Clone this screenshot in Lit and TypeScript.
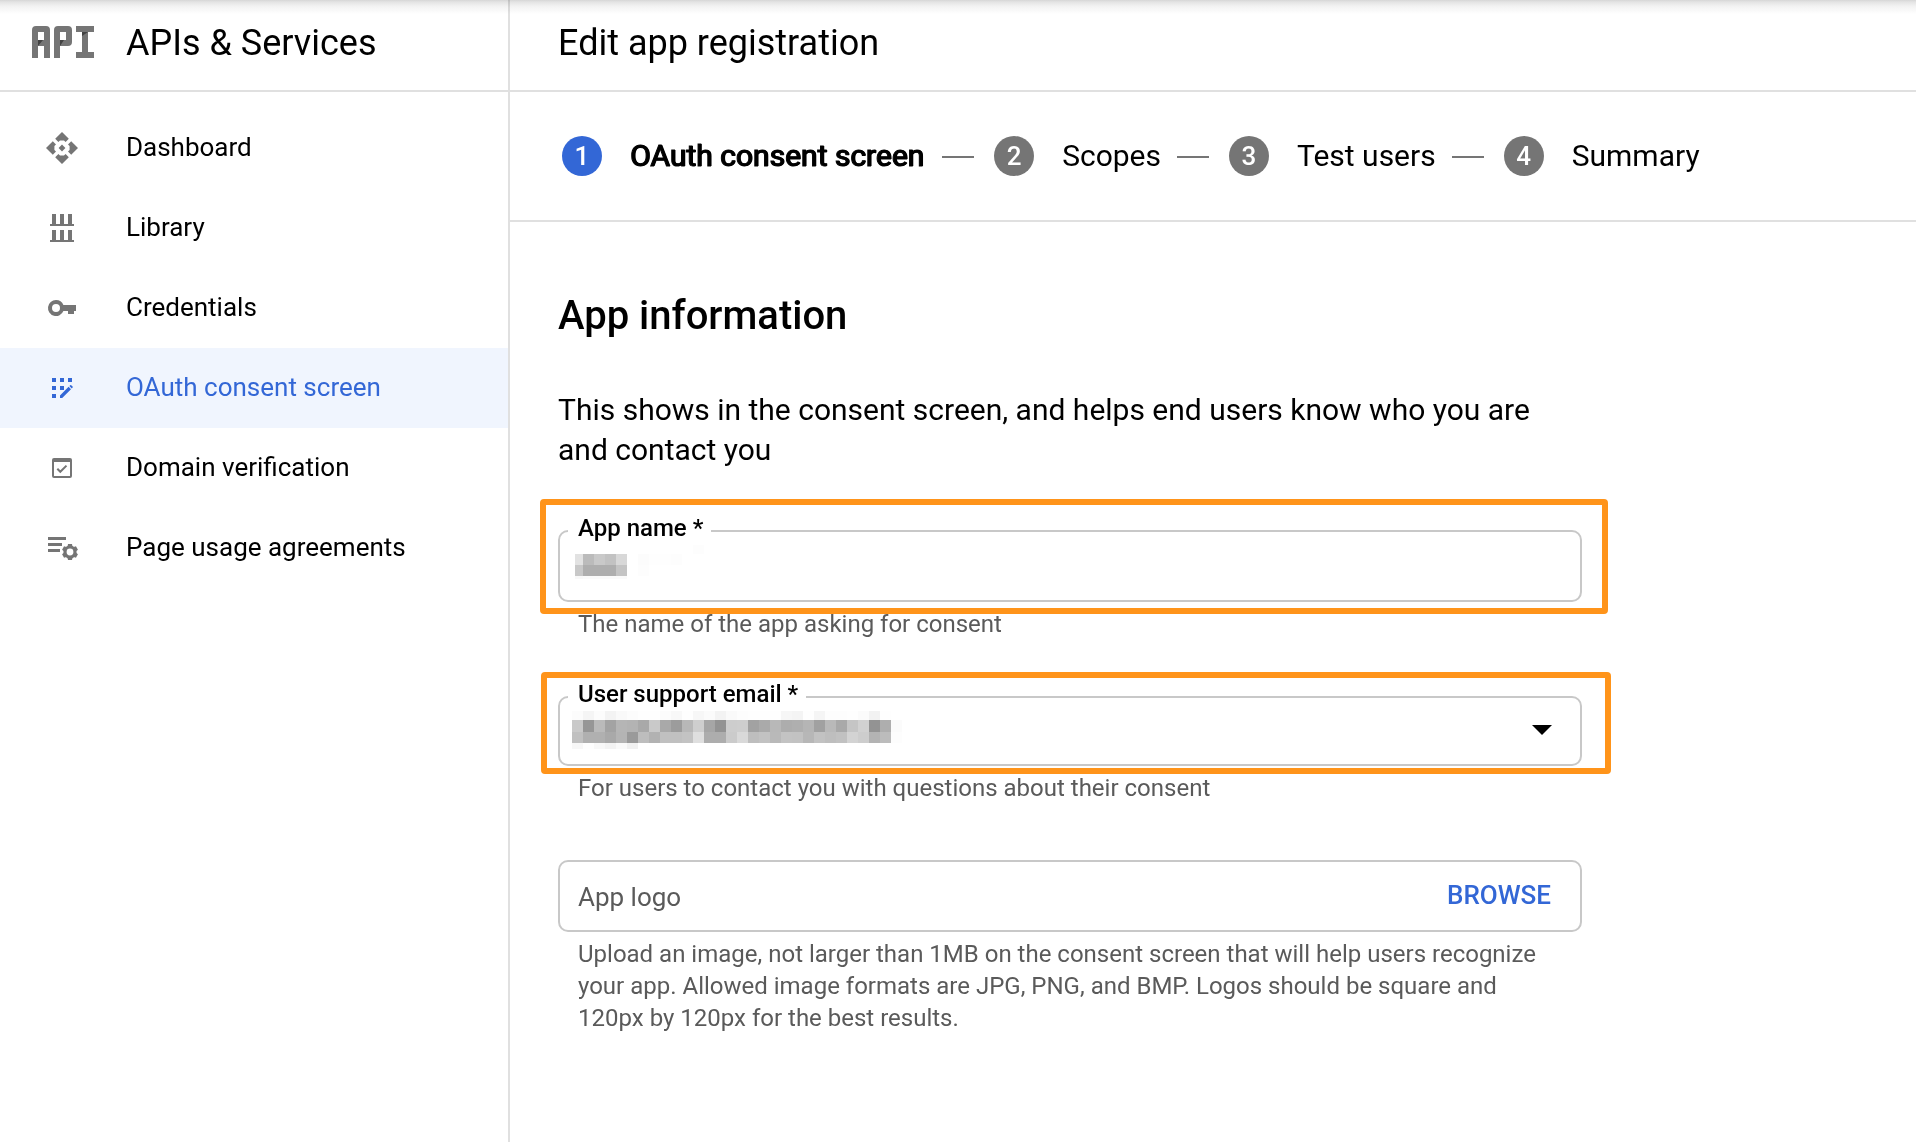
import { LitElement, html, svg, css, nothing } from "lit";
import type { SVGTemplateResult } from "lit";
import { customElement, property } from "lit/decorators.js";
import { classMap } from "lit/directives/class-map.js";

const diamondArm = "M18 2l6.8 6.8-3.2 3.2-1.6-1.6h-4L14.4 12l-3.2-3.2z";

const icons: Record<string, SVGTemplateResult> = {
  dashboard: svg`
    ${[0, 90, 180, 270].map((a) => svg`<path d=${diamondArm} transform="rotate(${a} 18 18)" />`)}
    <path d="M18 14.6l3.4 3.4-3.4 3.4-3.4-3.4z" />`,
  library: svg`
    <path d="M6 14h24v2H6zM8 4h4v10H8zM16 4h4v10h-4zM24 4h4v10h-4z" />
    <path d="M6 30h24v2H6zM8 20h4v10H8zM16 20h4v10h-4zM24 20h4v10h-4z" />`,
  key: svg`
    <path fill-rule="evenodd" d="M12 10a8 8 0 0 1 7.4 5H32v6h-2v3h-6v-3h-4.6A8 8 0 1 1 12 10zm0 4a4 4 0 1 0 0 8 4 4 0 0 0 0-8z" />`,
  consent: svg`
    <path d="M8 8h4v4H8zM16 8h4v4h-4zM24 8h4v4h-4zM8 16h4v4H8zM16 16h4v4h-4zM8 24h4v4H8z" />
    <path d="M16 28v-2.6l8.6-8.6 2.4 2.4-8.8 8.8zM25.4 16l.8-.8a.7.7 0 0 1 1 0l1.4 1.4a.7.7 0 0 1 0 1l-.8.8z" />`,
  domain: svg`
    <path fill-rule="evenodd" d="M10 8h16a2 2 0 0 1 2 2v16a2 2 0 0 1-2 2H10a2 2 0 0 1-2-2V10a2 2 0 0 1 2-2zm0 4v14h16V12z" />
    <path d="M13.3 18.8l3 3 6.2-6.2" fill="none" stroke="currentColor" stroke-width="2" />`,
  agreements: svg`
    <path d="M4 7h18v3H4zM4 13h14v3H4zM4 19h12v3H4z" />
    <circle cx="26" cy="22" r="5" fill="none" stroke="currentColor" stroke-width="3.2" />
    ${[0, 60, 120, 180, 240, 300].map(
      (a) => svg`<path d="M24 14h4l.6 3h-5.2z" transform="rotate(${a} 26 22)" />`
    )}`,
};

@customElement("nav-item")
class NavItem extends LitElement {
  @property() icon = "";
  @property() label = "";
  @property({ type: Boolean }) active = false;

  static styles = css`
    :host {
      display: block;
    }
    .item {
      display: flex;
      align-items: center;
      gap: 46px;
      height: 80px;
      padding-left: 44px;
      color: #000;
      font-size: 26px;
      text-decoration: none;
      white-space: nowrap;
    }
    .icon {
      flex: none;
      width: 36px;
      height: 36px;
      color: #757575;
      fill: currentColor;
    }
    .text {
      padding-bottom: 2px;
    }
    .active {
      background: #f0f5fe;
      color: #3367d6;
    }
    .active .icon {
      color: #3367d6;
    }
  `;

  render() {
    return html`<a
      href="#"
      class=${classMap({ item: true, active: this.active })}
      aria-current=${this.active ? "page" : nothing}
    >
      <svg class="icon" viewBox="0 0 36 36" aria-hidden="true">${icons[this.icon]}</svg>
      <span class="text">${this.label}</span>
    </a>`;
  }
}

interface Cell {
  x: number;
  y: number;
  w: number;
  h: number;
  shade: string;
}

/* Lays a run of two-digit grey shades out as one row of blocks. */
const row = (y: number, h: number, first: number, shades: string, start = 0): Cell[] =>
  shades.split(" ").map((shade, i) => ({
    x: start + (i === 0 ? 0 : first + (i - 1) * 11),
    y,
    w: i === 0 ? first : 11,
    h,
    shade,
  }));

const nameCells: Cell[] = [
  ...row(11, 11, 8, "e2 bb c9 c2 d8", 3),
  ...row(22, 11, 8, "c8 ae ae ae c4", 3),
  ...row(33, 3, 8, "f8 fa fa fa fa", 3),
  ...row(11, 11, 11, "fc fe fe fd", 66),
  ...row(22, 11, 11, "fd", 66),
  ...row(2, 9, 11, "fd", 121),
];

const emailCells: Cell[] = [
  ...row(2, 9, 11, "fc f5 fc f3 f9 fc fe fe fc f8 fe f7 fb f3 fa fd fe fe fe f6 f4 fe f5 fd fd fe fb f2 fe"),
  ...row(11, 12, 11, "c9 96 ba a3 b5 b3 a9 c9 a9 9c b8 ce a6 93 cd ce a2 aa b8 ad af b5 a1 b9 a9 c5 d1 93 ae fb"),
  ...row(23, 11, 11, "c0 b0 b0 a9 b4 9a bd b2 c0 c0 c3 df ad ad cb d9 be c2 b9 c3 c2 b7 c2 be c1 d3 cd b3 bc fd"),
  ...row(34, 6, 11, "f7 fe f8 f3 fa f1"),
];

const redaction = (cells: Cell[]) => html`<svg
  class="redaction"
  width="340"
  height="40"
  viewBox="0 0 340 40"
  shape-rendering="crispEdges"
  aria-hidden="true"
>
  ${cells.map(
    (c) =>
      svg`<rect x=${c.x} y=${c.y} width=${c.w} height=${c.h} fill=${`#${c.shade}${c.shade}${c.shade}`} />`
  )}
</svg>`;

@customElement("app-root")
class AppRoot extends LitElement {
  static styles = css`
    :host {
      display: block;
      font-family: Roboto, "Liberation Sans", sans-serif;
      color: #000;
    }
    .page {
      position: relative;
      display: flex;
      min-height: 100vh;
      background: #fff;
      overflow: hidden;
    }
    .top-shadow {
      position: absolute;
      inset: 0 0 auto;
      height: 14px;
      background: linear-gradient(#d6d6d6, #e4e4e4 2px, #f2f2f2 6px, rgba(255, 255, 255, 0));
      mix-blend-mode: multiply;
      pointer-events: none;
    }
    .sidebar {
      flex: 0 0 508px;
      border-right: 2px solid #e0e0e0;
    }
    .bar {
      display: flex;
      align-items: center;
      box-sizing: border-box;
      height: 92px;
      padding-bottom: 6px;
      border-bottom: 2px solid #e0e0e0;
      white-space: nowrap;
    }
    .title {
      margin: 0;
      padding-top: 2px;
      font-size: 36px;
      font-weight: 400;
      line-height: 48px;
    }
    .product {
      gap: 32px;
      padding-left: 32px;
    }
    .nav {
      padding-top: 16px;
    }
    .main {
      flex: 1;
      min-width: 0;
    }
    .heading {
      padding-left: 48px;
    }
    .steps {
      display: flex;
      align-items: center;
      box-sizing: border-box;
      height: 130px;
      margin: 0;
      padding: 0 0 0 52px;
      border-bottom: 2px solid #e0e0e0;
      list-style: none;
      font-size: 30px;
      white-space: nowrap;
    }
    .step {
      display: flex;
      align-items: center;
    }
    .step + .step::before {
      content: "";
      width: 32px;
      height: 2px;
      margin: 2px 20px 0 16px;
      background: #757575;
    }
    .number {
      display: flex;
      align-items: center;
      justify-content: center;
      width: 40px;
      height: 40px;
      margin-right: 28px;
      border-radius: 50%;
      background: #757575;
      color: #fff;
      font-size: 26px;
      font-weight: 500;
    }
    .name {
      padding-bottom: 2px;
    }
    .current .number {
      background: #3367d6;
    }
    .current .name {
      padding-right: 2px;
      -webkit-text-stroke: 1px #000;
      text-shadow: 1px 0 0 #000;
    }
    .form {
      max-width: 1024px;
      padding: 70px 48px 48px;
    }
    .section {
      margin: 0 0 50px;
      font-size: 40px;
      font-weight: 500;
      line-height: 48px;
    }
    .intro {
      margin: 0 0 60px;
      font-size: 30px;
      line-height: 40px;
    }
    .field {
      margin-bottom: 56px;
    }
    .box {
      position: relative;
      display: flex;
      align-items: center;
      box-sizing: border-box;
      height: 72px;
      border: 2px solid #c8c8c8;
      border-radius: 10px;
    }
    .select-box {
      height: 70px;
    }
    .floating {
      position: absolute;
      top: -20px;
      left: 8px;
      padding: 0 8px 0 10px;
      background: #fff;
      font-size: 24px;
      font-weight: 500;
      line-height: 32px;
    }
    .control {
      flex: 1;
      min-width: 0;
      height: 100%;
      box-sizing: border-box;
      padding: 2px 18px 0;
      border: 0;
      border-radius: 8px;
      outline: 0;
      background: transparent;
      color: #000;
      font: inherit;
      font-size: 26px;
      appearance: none;
    }
    .control::placeholder {
      color: #5a5a5a;
      opacity: 1;
    }
    .redaction {
      position: absolute;
      top: 11px;
      left: 12px;
      pointer-events: none;
    }
    .arrow {
      position: absolute;
      right: 28px;
      width: 20px;
      height: 10px;
      margin-bottom: 2px;
      pointer-events: none;
    }
    .browse {
      margin-right: 29px;
      padding: 0 0 2px;
      border: 0;
      background: none;
      color: #3367d6;
      font: inherit;
      font-size: 26px;
      font-weight: 500;
      line-height: 32px;
      text-transform: uppercase;
    }
    .hint {
      margin: 6px 0 0;
      padding: 0 20px;
      color: #5a5a5a;
      font-size: 24px;
      line-height: 32px;
    }
    .marker {
      position: absolute;
      border: 6px solid #ff941a;
      border-radius: 4px;
      pointer-events: none;
    }
    .marker-name {
      inset: -33px -28px -14px -20px;
    }
    .marker-email {
      inset: -26px -31px -10px -19px;
    }
  `;

  private nav = [
    { icon: "dashboard", label: "Dashboard" },
    { icon: "library", label: "Library" },
    { icon: "key", label: "Credentials" },
    { icon: "consent", label: "OAuth consent screen", active: true },
    { icon: "domain", label: "Domain verification" },
    { icon: "agreements", label: "Page usage agreements" },
  ];

  private steps = ["OAuth consent screen", "Scopes", "Test users", "Summary"];

  private renderLogo() {
    return html`<svg width="62" height="32" viewBox="0 0 62 32" aria-hidden="true">
      <g fill="#757575" fill-rule="evenodd">
        <path d="M4 0h10a4 4 0 0 1 4 4v28h-6V20H6v12H0V4a4 4 0 0 1 4-4zM6 6v8h6V6z" />
        <path d="M26 0h10a4 4 0 0 1 4 4v12a4 4 0 0 1-4 4h-8v12h-6V4a4 4 0 0 1 4-4zM28 6v8h6V6z" />
        <path d="M44 0h18v6h-6v20h6v6H44v-6h6V6h-6z" />
      </g>
      <path fill="#424242" d="M6 14h5l-5 6zM28 14h4l-4 6zM50 6h6l-6 4z" />
    </svg>`;
  }

  render() {
    return html`
      <div class="page">
        <aside class="sidebar">
          <div class="bar product">
            ${this.renderLogo()}
            <h2 class="title">APIs &amp; Services</h2>
          </div>
          <nav class="nav">
            ${this.nav.map(
              (n) => html`<nav-item .icon=${n.icon} .label=${n.label} ?active=${!!n.active}></nav-item>`
            )}
          </nav>
        </aside>
        <main class="main">
          <header class="bar heading"><h1 class="title">Edit app registration</h1></header>
          <ol class="steps">
            ${this.steps.map(
              (name, i) => html`<li class=${classMap({ step: true, current: i === 0 })}>
                <span class="number">${i + 1}</span><span class="name">${name}</span>
              </li>`
            )}
          </ol>
          <form class="form">
            <h2 class="section">App information</h2>
            <p class="intro">
              This shows in the consent screen, and helps end users know who you are and contact you
            </p>
            <div class="field">
              <div class="box">
                <input class="control" id="app-name" type="text" aria-describedby="app-name-hint" />
                <label class="floating" for="app-name">App name *</label>
                ${redaction(nameCells)}
                <span class="marker marker-name"></span>
              </div>
              <p class="hint" id="app-name-hint">The name of the app asking for consent</p>
            </div>
            <div class="field">
              <div class="box select-box">
                <select class="control" id="email" aria-describedby="email-hint">
                  <option></option>
                </select>
                <label class="floating" for="email">User support email *</label>
                ${redaction(emailCells)}
                <svg class="arrow" viewBox="0 0 20 10" aria-hidden="true"><path d="M0 0h20L10 10z" /></svg>
                <span class="marker marker-email"></span>
              </div>
              <p class="hint" id="email-hint">
                For users to contact you with questions about their consent
              </p>
            </div>
            <div class="field">
              <div class="box">
                <input
                  class="control"
                  type="text"
                  placeholder="App logo"
                  aria-label="App logo"
                  aria-describedby="logo-hint"
                  readonly
                />
                <button class="browse" type="button">Browse</button>
              </div>
              <p class="hint" id="logo-hint">
                Upload an image, not larger than 1MB on the consent screen that will help users
                recognize your app. Allowed image formats are JPG, PNG, and BMP. Logos should be square
                and 120px by 120px for the best results.
              </p>
            </div>
          </form>
        </main>
        <div class="top-shadow"></div>
      </div>
    `;
  }
}
